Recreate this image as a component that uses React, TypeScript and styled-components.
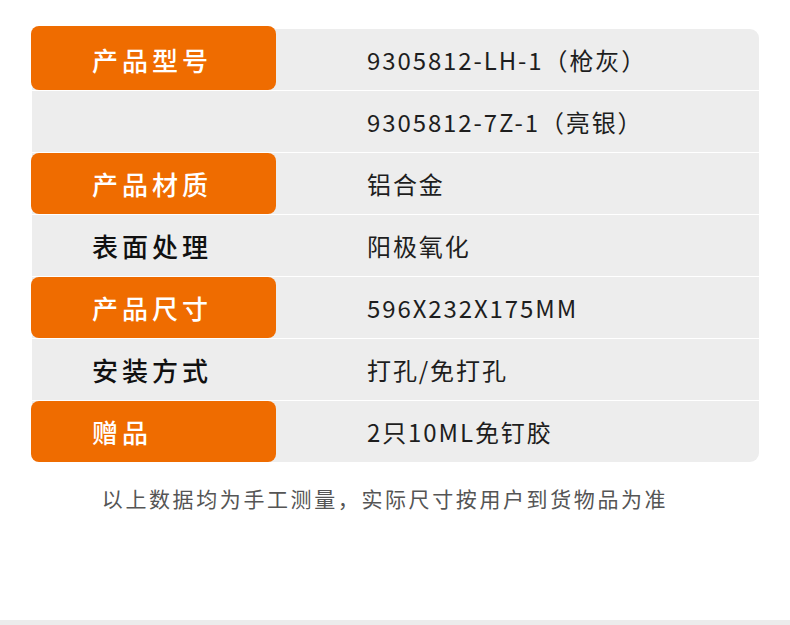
import styled, { createGlobalStyle } from "styled-components";

// GLOBAL
const GlobalStyle = createGlobalStyle`
  html, body {
    margin: 0;
    padding: 0;
    background: #ffffff;
  }
  body {
    font-family: "Noto Sans CJK SC", "Noto Sans", sans-serif;
  }
`;

// STYLED
const Page = styled.div`
  width: 790px;
  height: 625px;
  display: flex;
  flex-direction: column;
  overflow: hidden;
`;
const Table = styled.div`
  margin: 29px 0 0 32px;
  width: 727px;
  display: flex;
  flex-direction: column;
  gap: 1px;
  background: #ffffff;
  border-radius: 9px;
`;
const Row = styled.div<{ $first?: boolean; $last?: boolean }>`
  height: 61px;
  display: flex;
  align-items: stretch;
  background: #ededed;
  border-radius: ${(p) =>
    p.$first ? "9px 9px 0 0" : p.$last ? "0 0 9px 9px" : "0"};
`;
const Label = styled.div<{ $accent?: boolean; $first?: boolean }>`
  width: 245px;
  margin-left: -1px;
  margin-top: ${(p) => (p.$first ? "-3px" : "0")};
  flex-shrink: 0;
  display: flex;
  align-items: center;
  padding-left: 61px;
  padding-top: ${(p) => (p.$first ? "3px" : "0")};
  box-sizing: border-box;
  border-radius: 8px;
  background: ${(p) => (p.$accent ? "#ef6c00" : "transparent")};
  color: ${(p) => (p.$accent ? "#ffffff" : "#111111")};
  font-size: 26px;
  font-weight: 500;
  letter-spacing: 4px;
`;
const Value = styled.div`
  flex: 1;
  display: flex;
  align-items: center;
  padding-left: 91px;
  font-size: 24px;
  color: #1e1e1e;
  letter-spacing: 1.9px;
`;
const Note = styled.p`
  margin: 21px 0 0;
  padding-right: 20px;
  text-align: center;
  font-size: 21px;
  letter-spacing: 2.6px;
  color: #555555;
`;
const Spacer = styled.div`
  flex: 1;
`;
const BottomBar = styled.div`
  height: 5px;
  background: #ececec;
`;

const rows = [
  { label: "产品型号", value: "9305812-LH-1（枪灰）", accent: true },
  { label: "", value: "9305812-7Z-1（亮银）", accent: false },
  { label: "产品材质", value: "铝合金", accent: true },
  { label: "表面处理", value: "阳极氧化", accent: false },
  { label: "产品尺寸", value: "596X232X175MM", accent: true },
  { label: "安装方式", value: "打孔/免打孔", accent: false },
  { label: "赠品", value: "2只10ML免钉胶", accent: true },
];

export default function App() {
  return (
    <>
      <GlobalStyle />
      <Page>
        <Table>
          {rows.map((r, i) => (
            <Row key={i} $first={i === 0} $last={i === rows.length - 1}>
              <Label $accent={r.accent} $first={i === 0}>
                {r.label}
              </Label>
              <Value>{r.value}</Value>
            </Row>
          ))}
        </Table>
        <Note>以上数据均为手工测量，实际尺寸按用户到货物品为准</Note>
        <Spacer />
        <BottomBar />
      </Page>
    </>
  );
}
